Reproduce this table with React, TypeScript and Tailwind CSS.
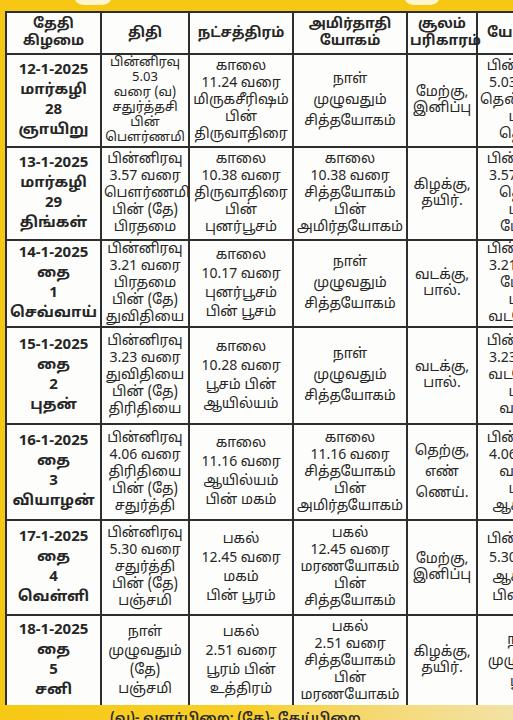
const font = {
  fontFamily: '"Noto Sans Tamil", "Noto Sans", "Liberation Sans", sans-serif',
};

interface Row {
  height: string;
  date: string[];
  thithi: string[];
  star: string[];
  amirtha: string[];
  soolam: string[];
  yogini: string[];
}

const rows: Row[] = [
  {
    height: "h-[93px]",
    date: ["12-1-2025", "மார்கழி", "28", "ஞாயிறு"],
    thithi: ["பின்னிரவு", "5.03", "வரை (வ)", "சதுர்த்தசி", "பின்", "பௌர்ணமி"],
    star: ["காலை", "11.24 வரை", "மிருகசீரிஷம்", "பின்", "திருவாதிரை"],
    amirtha: ["நாள்", "முழுவதும்", "சித்தயோகம்"],
    soolam: ["மேற்கு,", "இனிப்பு"],
    yogini: ["பின்னிரவு", "5.03 வரை", "தென்மேற்கு", "பின்", "தெற்கு"],
  },
  {
    height: "h-[93px]",
    date: ["13-1-2025", "மார்கழி", "29", "திங்கள்"],
    thithi: ["பின்னிரவு", "3.57 வரை", "பௌர்ணமி", "பின் (தே)", "பிரதமை"],
    star: ["காலை", "10.38 வரை", "திருவாதிரை", "பின்", "புனர்பூசம்"],
    amirtha: ["காலை", "10.38 வரை", "சித்தயோகம்", "பின்", "அமிர்தயோகம்"],
    soolam: ["கிழக்கு,", "தயிர்."],
    yogini: ["பின்னிரவு", "3.57 வரை", "தெற்கு", "பின்", "மேற்கு"],
  },
  {
    height: "h-[83px]",
    date: ["14-1-2025", "தை", "1", "செவ்வாய்"],
    thithi: ["பின்னிரவு", "3.21 வரை", "பிரதமை", "பின் (தே)", "துவிதியை"],
    star: ["காலை", "10.17 வரை", "புனர்பூசம்", "பின் பூசம்"],
    amirtha: ["நாள்", "முழுவதும்", "சித்தயோகம்"],
    soolam: ["வடக்கு,", "பால்."],
    yogini: ["பின்னிரவு", "3.21 வரை", "மேற்கு", "பின்", "வடமேற்கு"],
  },
  {
    height: "h-[97px]",
    date: ["15-1-2025", "தை", "2", "புதன்"],
    thithi: ["பின்னிரவு", "3.23 வரை", "துவிதியை", "பின் (தே)", "திரிதியை"],
    star: ["காலை", "10.28 வரை", "பூசம் பின்", "ஆயில்யம்"],
    amirtha: ["நாள்", "முழுவதும்", "சித்தயோகம்"],
    soolam: ["வடக்கு,", "பால்."],
    yogini: ["பின்னிரவு", "3.23 வரை", "வடமேற்கு", "பின்", "வடக்கு"],
  },
  {
    height: "h-[96px]",
    date: ["16-1-2025", "தை", "3", "வியாழன்"],
    thithi: ["பின்னிரவு", "4.06 வரை", "திரிதியை", "பின் (தே)", "சதுர்த்தி"],
    star: ["காலை", "11.16 வரை", "ஆயில்யம்", "பின் மகம்"],
    amirtha: ["காலை", "11.16 வரை", "சித்தயோகம்", "பின்", "அமிர்தயோகம்"],
    soolam: ["தெற்கு,", "எண்", "ணெய்."],
    yogini: ["பின்னிரவு", "4.06 வரை", "வடக்கு", "பின்", "ஆகாயம்"],
  },
  {
    height: "h-[95px]",
    date: ["17-1-2025", "தை", "4", "வெள்ளி"],
    thithi: ["பின்னிரவு", "5.30 வரை", "சதுர்த்தி", "பின் (தே)", "பஞ்சமி"],
    star: ["பகல்", "12.45 வரை", "மகம்", "பின் பூரம்"],
    amirtha: ["பகல்", "12.45 வரை", "மரணயோகம்", "பின்", "சித்தயோகம்"],
    soolam: ["மேற்கு,", "இனிப்பு"],
    yogini: ["பின்னிரவு", "5.30 வரை", "ஆகாயம்", "பின் பூமி"],
  },
  {
    height: "h-[92px]",
    date: ["18-1-2025", "தை", "5", "சனி"],
    thithi: ["நாள்", "முழுவதும்", "(தே)", "பஞ்சமி"],
    star: ["பகல்", "2.51 வரை", "பூரம் பின்", "உத்திரம்"],
    amirtha: ["பகல்", "2.51 வரை", "சித்தயோகம்", "பின்", "மரணயோகம்"],
    soolam: ["கிழக்கு,", "தயிர்."],
    yogini: ["நாள்", "முழுவதும்", "பூமி"],
  },
];

// the printed page spreads short cells out, so line spacing goes by line count
const leading: Record<number, string> = {
  2: "text-[14px] leading-[16px]",
  3: "text-[14px] leading-[21px]",
  4: "text-[14px] leading-[19px]",
  5: "text-[14px] leading-[17px]",
  6: "text-[13px] leading-[15px]",
};

const cell =
  "border-2 border-[#2e2e2e] text-center align-middle text-[#262626] px-[2px]";

function Cell({ items }: { items: string[] }) {
  return (
    <td
      className={`${cell} ${leading[items.length] ?? "text-[14px] leading-[16px]"}`}
    >
      {items.map((t, i) => (
        <div key={i}>{t}</div>
      ))}
    </td>
  );
}

const head = `${cell} text-[14px] leading-[17px] font-bold text-[#1e1e1e]`;

export default function App() {
  return (
    <div
      className="relative w-[513px] h-[720px] overflow-hidden bg-[#f7c813]"
      style={font}
    >
      {/* white shapes of the banner above, cut by the frame */}
      <div className="absolute left-[74px] top-[-14px] w-[38px] h-[19px] rounded-full bg-[#fff6d0]" />
      <div className="absolute left-[404px] top-[-14px] w-[36px] h-[19px] rounded-full bg-[#fff6d0]" />

      <div className="pl-[5px] pt-[11px]">
        <table className="table-fixed border-collapse bg-[#fdfdfb] w-[566px]">
          <colgroup>
            <col className="w-[95px]" />
            <col className="w-[88px]" />
            <col className="w-[104px]" />
            <col className="w-[114px]" />
            <col className="w-[70px]" />
            <col className="w-[95px]" />
          </colgroup>
          <thead>
            <tr className="h-[42px]">
              <th className={head}>
                <div>தேதி</div>
                <div>கிழமை</div>
              </th>
              <th className={head}>திதி</th>
              <th className={head}>நட்சத்திரம்</th>
              <th className={head}>
                <div>அமிர்தாதி</div>
                <div>யோகம்</div>
              </th>
              <th className={head}>
                <div>சூலம்</div>
                <div>பரிகாரம்</div>
              </th>
              <th className={head}>யோகினி</th>
            </tr>
          </thead>
          <tbody>
            {rows.map((r) => (
              <tr key={r.date[0]} className={r.height}>
                <td
                  className={`${cell} text-[15px] leading-[20px] font-bold text-[#1e1e1e]`}
                >
                  {r.date.map((t, i) => (
                    <div key={i}>{t}</div>
                  ))}
                </td>
                <Cell items={r.thithi} />
                <Cell items={r.star} />
                <Cell items={r.amirtha} />
                <Cell items={r.soolam} />
                <Cell items={r.yogini} />
              </tr>
            ))}
          </tbody>
        </table>
      </div>

      <div className="absolute left-0 right-0 top-[705px] h-[15px] bg-gradient-to-r from-[#f7c813] via-[#f8cf2a] to-[#f3e2a6]" />
      <div className="absolute left-[110px] top-[710px] text-[14px] font-semibold leading-[20px] text-[#2a2a2a] whitespace-nowrap">
        (வ)- வளர்பிறை; (தே)- தேய்பிறை
      </div>
    </div>
  );
}
